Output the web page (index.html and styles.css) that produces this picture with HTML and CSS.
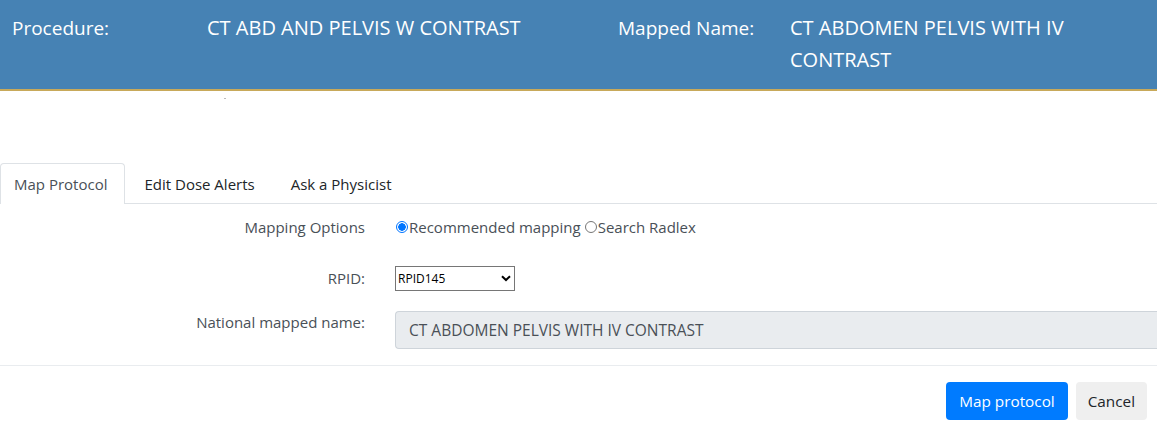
FILE: index.html
```html
<!DOCTYPE html>
<html>
<head>
<meta charset="utf-8">
<link rel="stylesheet" href="styles.css">
</head>
<body>
<header class="hdr">
  <div class="hdr-label">Procedure:</div>
  <div class="hdr-value">CT ABD AND PELVIS W CONTRAST</div>
  <div class="hdr-label">Mapped Name:</div>
  <div class="hdr-value">CT ABDOMEN PELVIS WITH IV CONTRAST</div>
</header>
<div class="dot-row"><span class="dot"></span></div>
<nav class="tabs">
  <a class="tab active">Map Protocol</a>
  <a class="tab">Edit Dose Alerts</a>
  <a class="tab">Ask a Physicist</a>
</nav>
<section class="form">
  <div class="frow r1">
    <label class="flabel">Mapping Options</label>
    <div class="fctrl radios">
      <span class="radio checked"></span><span class="rtext">Recommended mapping</span>
      <span class="radio"></span><span class="rtext">Search Radlex</span>
    </div>
  </div>
  <div class="frow r2">
    <label class="flabel">RPID:</label>
    <div class="fctrl">
      <div class="select"><span>RPID145</span>
        <svg class="chev" width="10" height="7" viewBox="0 0 10 7"><path d="M1 1.2 L5 5 L9 1.2" fill="none" stroke="#000" stroke-width="2"/></svg>
      </div>
    </div>
  </div>
  <div class="frow r3">
    <label class="flabel top">National mapped name:</label>
    <div class="fctrl">
      <div class="readonly">CT ABDOMEN PELVIS WITH IV CONTRAST</div>
    </div>
  </div>
</section>
<footer class="foot">
  <button class="btn primary">Map protocol</button>
  <button class="btn secondary">Cancel</button>
</footer>
</body>
</html>
```
FILE: styles.css
```css
html, body { margin: 0; padding: 0; background: #fff; }
body { font-family: "Open Sans", "Noto Sans", sans-serif; color: #212529; width: 1157px; overflow: hidden; }

.hdr {
  background: #4682b4;
  border-bottom: 2px solid #c8a95a;
  display: grid;
  grid-template-columns: 207px 411px 172px 300px;
  align-items: start;
  padding-top: 12px;
  box-sizing: border-box;
  height: 91px;
  color: #fff;
  line-height: 32px;
}
.hdr-label { font-size: 19px; }
.hdr-label:first-child { padding-left: 12px; }
.hdr-value { font-size: 20px; }

.dot-row { height: 72px; position: relative; }
.dot { position: absolute; left: 224px; top: 7px; width: 2px; height: 1px; background: #bbb; }

.tabs { display: flex; border-bottom: 1px solid #dee2e6; height: 41px; box-sizing: border-box; }
.tab {
  font-size: 15px; padding: 0 16px 0 18px; line-height: 40px; color: #212529;
  border: 1px solid transparent; border-bottom: none;
  height: 41px; box-sizing: border-box;
}
.tab.active { color: #495057; border-color: #dee2e6; border-radius: 4px 4px 0 0; background: #fff; padding-left: 13px; padding-right: 17px; }

.form { border-bottom: 1px solid #e9ecef; padding-bottom: 16px; }
.frow { display: flex; align-items: center; box-sizing: border-box; }
.flabel { text-align: right; font-size: 15px; color: #495057; padding-right: 30px; box-sizing: border-box; width: 395px; }
.flabel.top { align-self: flex-start; padding-top: 1px; }
.fctrl { flex: 1; }
.r1 { height: 46px; }
.r2 { height: 54px; padding-top: 2px; }
.r3 { height: 45px; padding-top: 7px; align-items: flex-start; }

.radios { display: flex; align-items: center; font-size: 15px; color: #495057; }
.radio { width: 10px; height: 10px; border: 1px solid #767676; border-radius: 50%; box-sizing: content-box; margin: 0 1px 0 1px; }
.radio.checked { border-color: #0075ff; background: radial-gradient(circle, #0075ff 0 3.5px, #fff 4px); }
.rtext { margin-right: 3px; }

.select {
  width: 120px; height: 25px; box-sizing: border-box; border: 1px solid #767676; border-radius: 0;
  display: flex; align-items: center; justify-content: space-between; padding: 0 3px 0 2px;
  font-size: 12px; color: #000;
}
.readonly {
  background: #e9ecef; border: 1px solid #ced4da; border-right: none; border-radius: 4px 0 0 4px;
  height: 38px; box-sizing: border-box; padding: 0 13px; line-height: 36px;
  font-size: 15.5px; color: #495057;
}

.foot { display: flex; justify-content: flex-end; gap: 8px; padding: 16px 10px 0 0; }
.btn { font-family: inherit; font-size: 15.3px; height: 38px; border: none; border-radius: 4px; padding: 0 13px; }
.primary { background: #007bff; color: #fff; }
.secondary { background: #efefef; color: #212529; padding: 0 12px; }
```
